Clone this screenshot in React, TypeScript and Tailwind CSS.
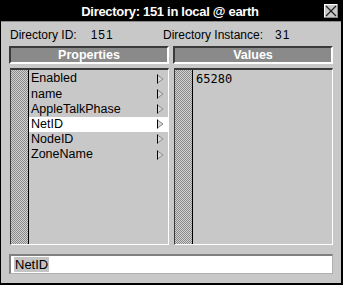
import React from "react";

const checker =
  "bg-[repeating-conic-gradient(#8a8a8a_0_25%,#d2d2d2_0_50%)] bg-[length:2px_2px]";

function Arrow() {
  return (
    <svg width="8" height="10" viewBox="0 0 8 10" className="block">
      <polygon points="1.5,1 7,5 1.5,9" fill="#d8d8d8" stroke="#8a8a8a" strokeWidth="1" />
      <line x1="1.5" y1="0.5" x2="1.5" y2="9.5" stroke="#000" strokeWidth="1" />
    </svg>
  );
}

const props = ["Enabled", "name", "AppleTalkPhase", "NetID", "NodeID", "ZoneName"];

export default function App() {
  return (
    <div
      className="w-[343px] h-[285px] box-border bg-[#c8c8c8] border-l border-r-2 border-b-2 border-black flex flex-col"
      style={{ fontFamily: '"Liberation Sans", Arial, sans-serif' }}
    >
      {/* Title bar */}
      <div className="relative h-[21px] bg-black border-b border-[#8a8a8a] box-content flex items-center justify-center">
        <span className="text-white font-bold text-[13px] tracking-[-0.3px] leading-none pt-[2px] pr-[2px]">
          Directory: 151 in local @ earth
        </span>
        <div className="absolute right-[3px] top-[4px] w-[14px] h-[14px]">
          <svg width="14" height="14" viewBox="0 0 14 14" className="block">
            <rect x="0" y="0" width="14" height="14" fill="#c8c8c8" />
            <line x1="0.5" y1="0" x2="0.5" y2="14" stroke="#fff" />
            <line x1="0" y1="0.5" x2="14" y2="0.5" stroke="#fff" />
            <line x1="13.5" y1="0" x2="13.5" y2="14" stroke="#888" />
            <line x1="0" y1="13.5" x2="14" y2="13.5" stroke="#888" />
            <line x1="2" y1="2" x2="12" y2="12" stroke="#222" strokeWidth="1.2" />
            <line x1="12" y1="2" x2="2" y2="12" stroke="#222" strokeWidth="1.2" />
          </svg>
        </div>
      </div>

      {/* Info row */}
      <div className="h-[24px] flex items-center pl-[9px] text-[12px] text-black leading-none pt-[1px]">
        <div className="w-[153px] flex">
          <span>Directory ID:</span>
          <span className="ml-[14px] tracking-[1px]">151</span>
        </div>
        <div className="flex">
          <span>Directory Instance:</span>
          <span className="ml-[12px] tracking-[1px]">31</span>
        </div>
      </div>

      {/* Columns */}
      <div className="flex gap-[4px] pl-[8px] pr-[8px]">
        {/* Properties column */}
        <div className="w-[160px] flex flex-col">
          <div className="h-[18px] bg-[#8a8a8a] border-t-2 border-l-2 border-[#3a3a3a] border-b-2 border-r-2 border-b-white border-r-white flex items-center justify-center text-white font-bold text-[12.5px] leading-none">
            Properties
          </div>
          <div className="mt-[4px] ml-[1px] h-[177px] border-t-2 border-l border-[#3a3a3a] border-b border-r border-b-white border-r-white flex">
            <div className={`w-[18px] h-full ${checker} border-r border-black`} />
            <div className="flex-1 flex flex-col pt-[1px]">
              {props.map((p) => (
                <div
                  key={p}
                  className={`h-[15.2px] flex items-center justify-between pl-[2px] pr-[4px] text-[12.5px] leading-none text-black ${
                    p === "NetID" ? "bg-white" : ""
                  }`}
                >
                  <span>{p}</span>
                  <Arrow />
                </div>
              ))}
            </div>
          </div>
        </div>

        {/* Values column */}
        <div className="w-[160px] flex flex-col">
          <div className="h-[18px] bg-[#8a8a8a] border-t-2 border-l-2 border-[#3a3a3a] border-b-2 border-r-2 border-b-white border-r-white flex items-center justify-center text-white font-bold text-[12.5px] leading-none">
            Values
          </div>
          <div className="mt-[4px] ml-[1px] h-[177px] border-t-2 border-l border-[#3a3a3a] border-b border-r border-b-white border-r-white flex">
            <div className={`w-[18px] h-full ${checker} border-r border-black`} />
            <div className="flex-1 flex flex-col pt-[1px]">
              <div
                className="h-[15.2px] flex items-center pl-[3px] text-[12px] leading-none text-black"
                style={{ fontFamily: '"DejaVu Sans Mono", monospace' }}
              >
                65280
              </div>
            </div>
          </div>
        </div>
      </div>

      {/* Input */}
      <div className="mt-[9px] ml-[8px] mr-[8px] h-[20px] bg-white border-t-2 border-l-2 border-[#808080] border-b border-r border-b-[#b0b0b0] border-r-[#b0b0b0] flex items-center pl-[3px]">
        <span className="bg-[#c4c4c4] text-black text-[13px] leading-[15px] px-[1px]">NetID</span>
      </div>
    </div>
  );
}
